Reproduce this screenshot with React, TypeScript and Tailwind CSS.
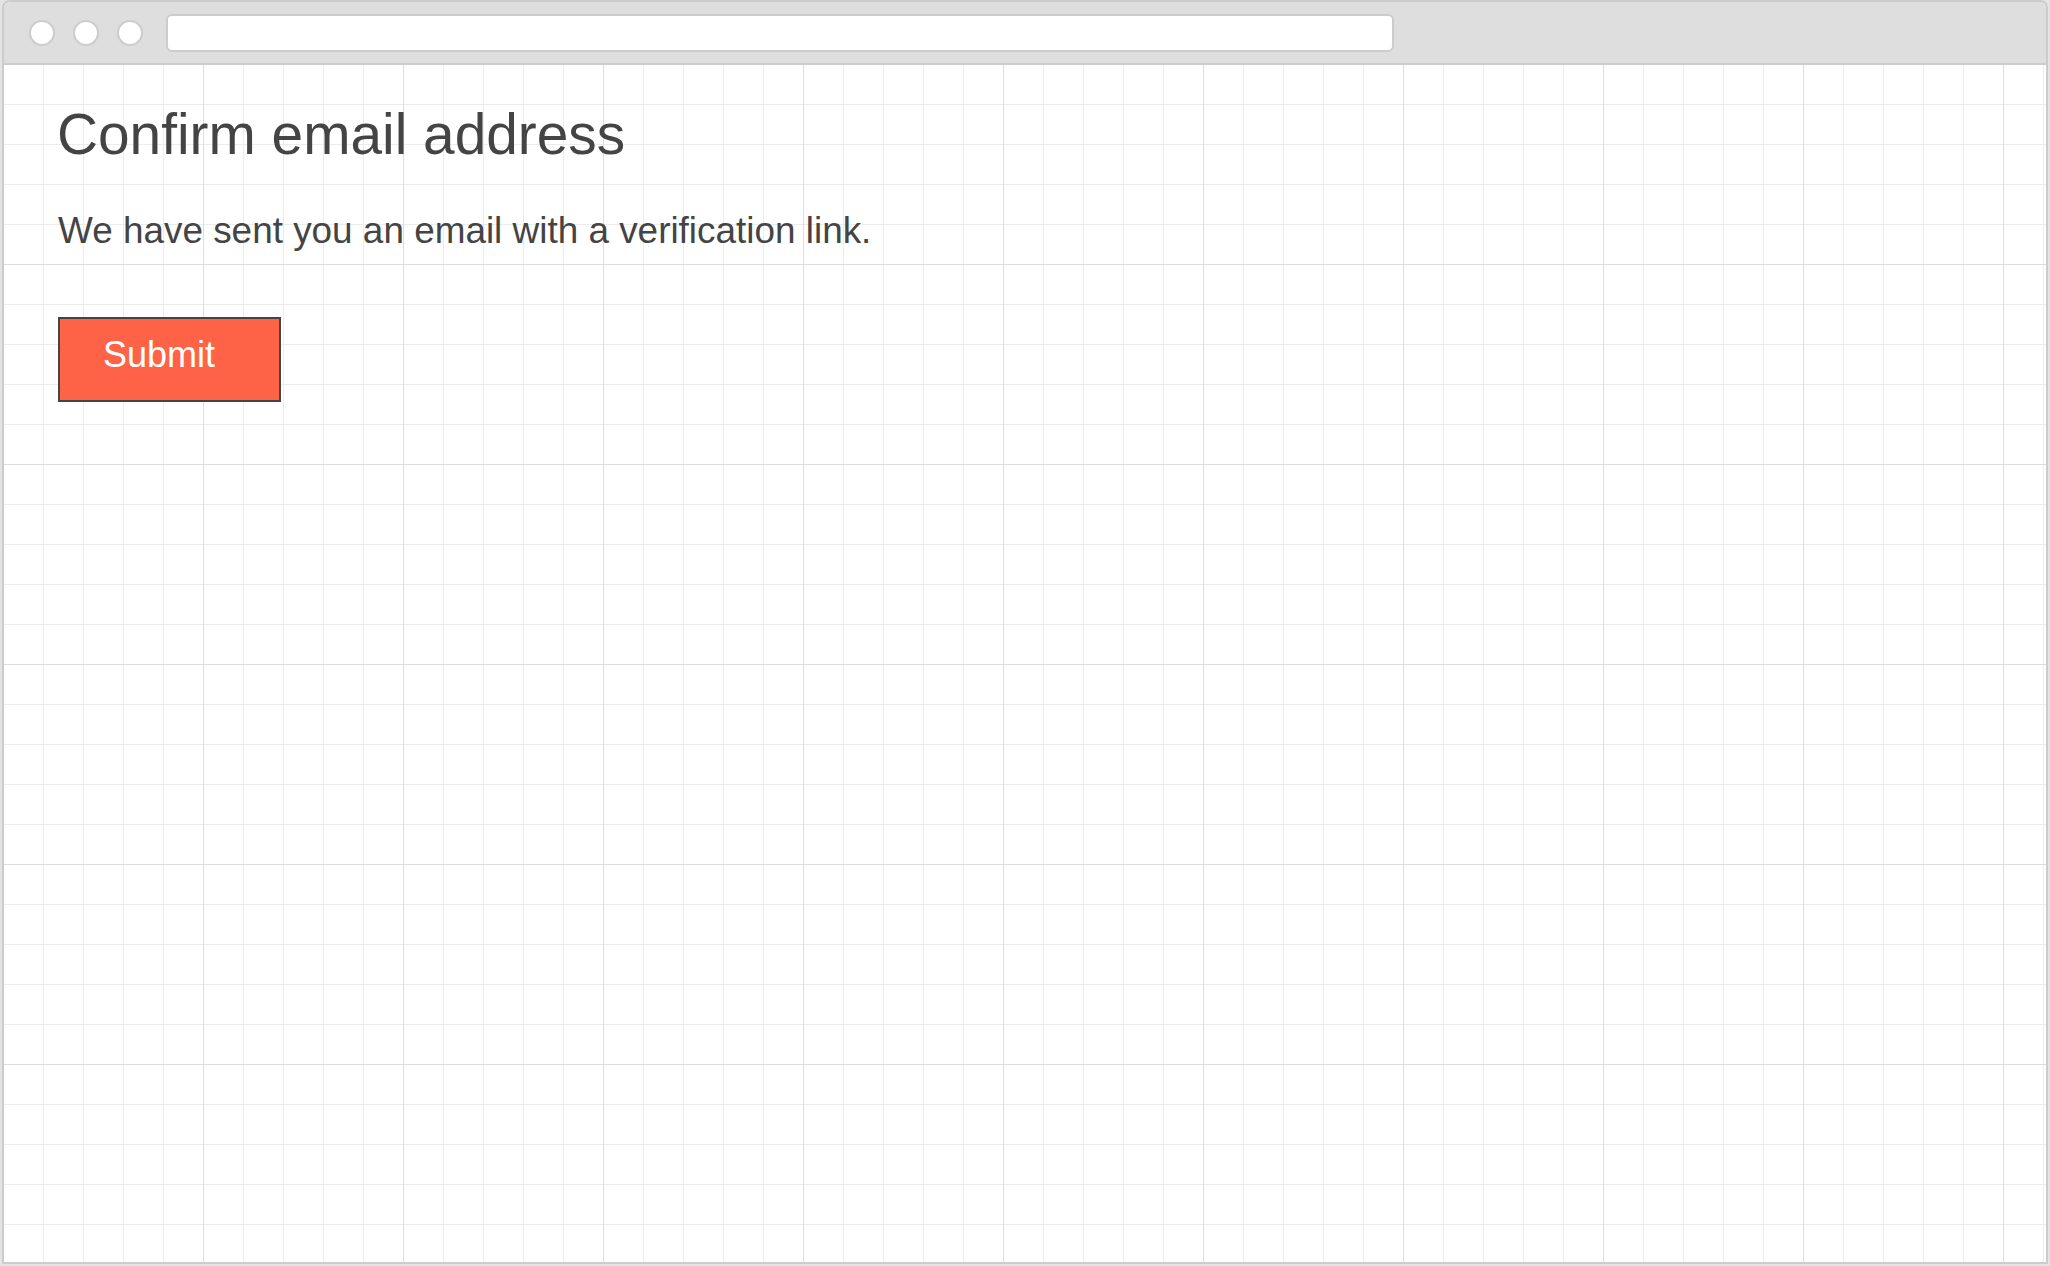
import React from 'react';

const font = { fontFamily: '"Liberation Sans", Arial, sans-serif' };

const App: React.FC = () => {
  return (
    <div className="w-[2050px] h-[1266px] bg-[#e4e4e4] overflow-hidden" style={font}>
      <div className="ml-[2px] w-[2046px] h-[1264px] flex flex-col border-2 border-[#cccccc] rounded-t-[8px] bg-white overflow-hidden">
        {/* browser chrome */}
        <div className="h-[63px] shrink-0 flex items-center pl-[25px] pt-[1px] bg-[#dedede] border-b-2 border-[#cccccc]">
          <div className="flex gap-[18px]">
            <span className="w-[26px] h-[26px] rounded-full bg-white border-2 border-[#cccccc]" />
            <span className="w-[26px] h-[26px] rounded-full bg-white border-2 border-[#cccccc]" />
            <span className="w-[26px] h-[26px] rounded-full bg-white border-2 border-[#cccccc]" />
          </div>
          <div className="ml-[23px] w-[1228px] h-[38px] rounded-[6px] bg-white border-2 border-[#cccccc]" />
        </div>

        {/* grid page */}
        <div className="flex-1 pl-[53px] pt-[42px] [background-image:linear-gradient(to_right,#dddddd_1px,transparent_1px),linear-gradient(to_bottom,#dddddd_1px,transparent_1px),linear-gradient(to_right,#ececec_1px,transparent_1px),linear-gradient(to_bottom,#ececec_1px,transparent_1px)] [background-size:200px_200px,200px_200px,40px_40px,40px_40px] [background-position:199px_199px,199px_199px,39px_39px,39px_39px]">
          <h1 className="text-[56.8px] leading-none font-normal text-[#444444]">Confirm email address</h1>
          <p className="mt-[49px] text-[36.9px] leading-none text-[#444444] pl-[1px]">
            We have sent you an email with a verification link.
          </p>
          <button className="mt-[67px] ml-[1px] w-[223px] h-[85px] border-2 border-[#444444] bg-[#ff6347] text-white text-[36px] leading-none text-left pl-[43px] pb-[8px]">
            Submit
          </button>
        </div>
      </div>
    </div>
  );
};

export default App;
